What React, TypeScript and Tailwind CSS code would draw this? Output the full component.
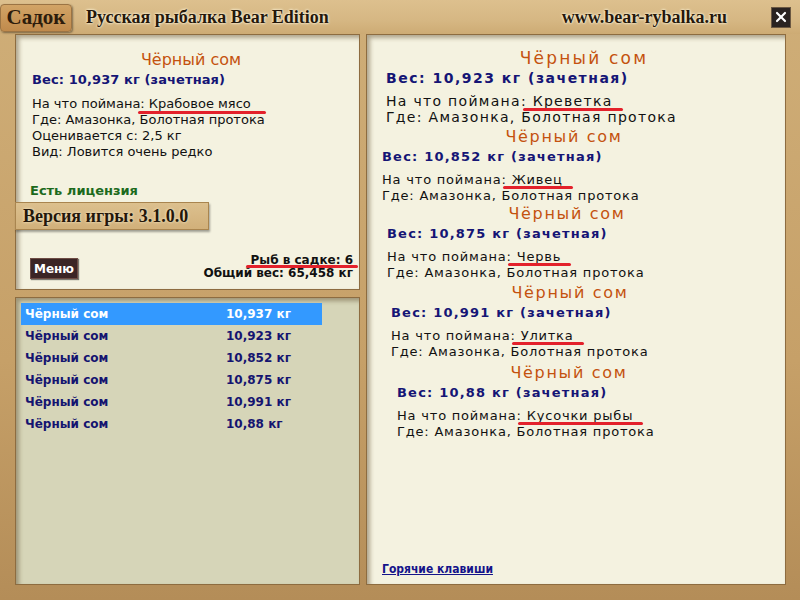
import React from "react";
import { X } from "lucide-react";

const sans = "font-['DejaVu_Sans',Verdana,sans-serif]";
const serif = "font-['Liberation_Serif','DejaVu_Serif',serif]";

const catches = [
  { weight: "10,923", bait: "Креветка", wrap: "mt-[13px]", title: "pl-[16px] text-[17px] tracking-[2.2px]", body: "pl-[19px]", big: true },
  { weight: "10,852", bait: "Живец", wrap: "mt-[2px]", title: "pr-[24px]", body: "pl-[15px]", big: false },
  { weight: "10,875", bait: "Червь", wrap: "mt-0", title: "pr-[18px]", body: "pl-[20px]", big: false },
  { weight: "10,991", bait: "Улитка", wrap: "mt-[2px]", title: "pr-[12px]", body: "pl-[24px]", big: false },
  { weight: "10,88", bait: "Кусочки рыбы", wrap: "mt-[3px]", title: "pr-[14px]", body: "pl-[30px]", big: false },
];

const list = ["10,937", "10,923", "10,852", "10,875", "10,991", "10,88"];

// red hand-drawn underline over the screenshot
const Marked = ({ children, className }: { children: React.ReactNode; className?: string }) => (
  <span className="relative">
    {children}
    <span className={"absolute h-[3px] rounded-full bg-[#e3212b] " + (className ?? "")} />
  </span>
);

const Panel = ({ children, className }: { children: React.ReactNode; className?: string }) => (
  <div
    className={
      "border border-[#8d6c40] shadow-[inset_3px_3px_4px_rgba(90,70,40,0.45)] " + (className ?? "")
    }
  >
    {children}
  </div>
);

export default function App() {
  return (
    <div className="w-[800px] h-[600px] flex flex-col bg-[linear-gradient(180deg,#cfae78_0%,#c6a068_60%,#b48d58_100%)] overflow-hidden">
      {/* header */}
      <div className="h-[34px] flex items-center bg-[linear-gradient(180deg,#ddc08e_0%,#d6b783_60%,#cdab74_100%)]">
        <div
          className={`${serif} ml-0 mt-[1px] h-[28px] w-[72px] flex items-center justify-center rounded-[4px] border border-[#9b7444] bg-[linear-gradient(180deg,#d2a466_0%,#c08a4c_100%)] shadow-[1px_1px_2px_rgba(0,0,0,0.4)] text-[21px] font-bold text-[#2d1c0c]`}
        >
          Садок
        </div>
        <div
          className={`${serif} ml-[14px] text-[18px] font-bold text-[#26180a] [text-shadow:0_0_3px_#fff8e0,0_0_2px_#fff8e0]`}
        >
          Русская рыбалка Bear Edition
        </div>
        <div
          className={`${serif} ml-auto mr-[44px] text-[18px] font-bold text-[#26180a] [text-shadow:0_0_3px_#fff8e0,0_0_2px_#fff8e0]`}
        >
          www.bear-rybalka.ru
        </div>
        <div className="mr-[9px] w-[20px] h-[21px] flex items-center justify-center bg-[#2a2321] border border-[#6b5842]">
          <X size={16} strokeWidth={3.2} color="#ffffff" />
        </div>
      </div>

      {/* body */}
      <div className="flex-1 flex gap-[6px] pl-[15px] pr-[14px] pb-[15px]">
        <div className="w-[345px] flex flex-col gap-[7px]">
          <Panel className={`${sans} relative h-[256px] flex flex-col bg-[#f4f2e0] pt-[15px] text-[13px] text-[#111]`}>
            <div className="h-[20px] leading-[20px] text-center pl-[7px] text-[16px] text-[#c4520f]">
              Чёрный сом
            </div>
            <div className="h-[20px] leading-[20px] pl-[16px] font-bold text-[#151575] tracking-[0.1px]">
              Вес: 10,937 кг (зачетная)
            </div>
            <div className="mt-[6px] pl-[16px] leading-[16px]">
              <div>
                На что поймана
                <Marked className="left-[-2px] right-[-15px] bottom-[-3px]">: Крабовое мясо</Marked>
              </div>
              <div>Где: Амазонка, Болотная протока</div>
              <div>Оценивается с: 2,5 кг</div>
              <div>Вид: Ловится очень редко</div>
            </div>
            <div className="mt-[23px] pl-[14px] leading-[16px] font-bold text-[#1c6a1c]">Есть лицензия</div>
            <div
              className={`${serif} mt-[3px] -ml-px h-[28px] w-[194px] flex items-center pl-[7px] border border-[#a9854f] bg-[linear-gradient(180deg,#dcc08e_0%,#d1b07a_100%)] shadow-[1px_2px_2px_rgba(0,0,0,0.35)] text-[18px] font-bold text-[#24170a] [text-shadow:0_0_3px_#fff6da]`}
            >
              Версия игры: 3.1.0.0
            </div>
            <div className="mt-auto mb-[9px] flex items-end justify-between pl-[14px] pr-[6px]">
              <div className="mb-[1px] h-[21px] w-[48px] flex items-center justify-center bg-[#3b2525] border border-[#6d4c44] text-[12px] font-bold text-white shadow-[1px_1px_1px_rgba(0,0,0,0.5)]">
                Меню
              </div>
              <div className="text-right text-[12px] leading-[13px] font-bold text-[#111]">
                <div>
                  <Marked className="left-[-5px] right-[-5px] bottom-[-1px]">Рыб в садке: 6</Marked>
                </div>
                <div>Общий вес: 65,458 кг</div>
              </div>
            </div>
          </Panel>

          <Panel className={`${sans} flex-1 bg-[#d6d5b8] pt-[5px] pl-[5px]`}>
            {list.map((w, i) => (
              <div
                key={i}
                className={
                  "w-[301px] h-[22px] flex items-center pl-[4px] text-[12px] font-bold " +
                  (i === 0 ? "bg-[#3399ff] text-white" : "text-[#141470]")
                }
              >
                <span className="w-[201px]">Чёрный сом</span>
                <span>{w} кг</span>
              </div>
            ))}
          </Panel>
        </div>

        <Panel className={`${sans} flex-1 flex flex-col bg-[#f4f2e0] text-[#111]`}>
          {catches.map((c, i) => (
            <div key={i} className={c.wrap}>
              <div
                className={
                  "h-[20px] leading-[20px] text-center text-[#c4520f] " +
                  (c.big ? c.title : c.title + " text-[16px] tracking-[1.7px]")
                }
              >
                Чёрный сом
              </div>
              <div
                className={
                  "h-[20px] leading-[20px] font-bold text-[#151575] " +
                  c.body +
                  (c.big ? " text-[14px] tracking-[1.5px]" : " text-[13px] tracking-[1.2px]")
                }
              >
                Вес: {c.weight} кг (зачетная)
              </div>
              <div
                className={
                  "mt-[5px] leading-[16px] " +
                  c.body +
                  (c.big ? " text-[14px] tracking-[1.3px]" : " text-[13px] tracking-[0.8px]")
                }
              >
                <div>
                  На что поймана:
                  <Marked className="left-[-4px] right-[-10px] bottom-[-2px]"> {c.bait}</Marked>
                </div>
                <div>Где: Амазонка, Болотная протока</div>
              </div>
            </div>
          ))}
          <div className="mt-auto mb-[6px] pl-[15px] text-[12px] font-bold font-['DejaVu_Sans_Condensed','DejaVu_Sans',sans-serif] text-[#14148a] underline">
            Горячие клавиши
          </div>
        </Panel>
      </div>
    </div>
  );
}
